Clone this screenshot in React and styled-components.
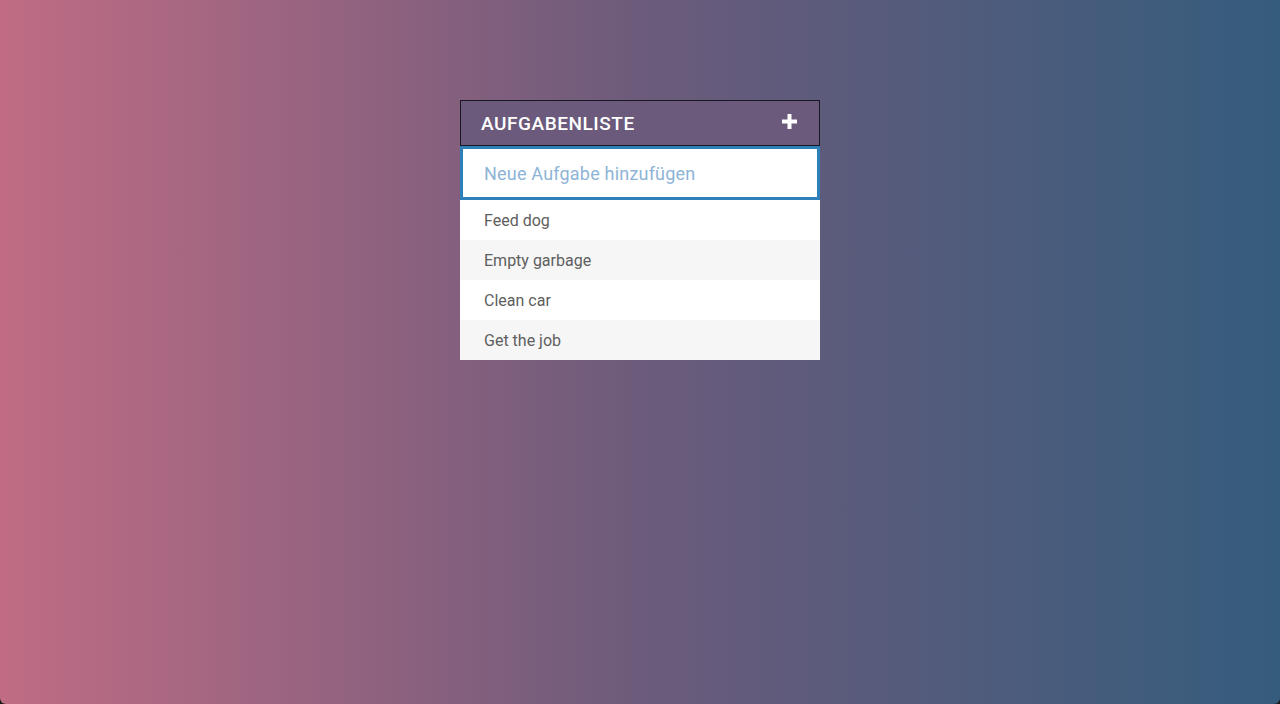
import React from "react";
import styled, { createGlobalStyle } from "styled-components";

const GlobalStyle = createGlobalStyle`
  html, body {
    margin: 0;
    padding: 0;
    background: #1a1a1a;
  }
  * {
    box-sizing: border-box;
  }
`;

const Page = styled.div`
  height: 704px;
  width: 1280px;
  background: linear-gradient(to right, #c06c84 0%, #6c5b7b 50%, #355c7d 100%);
  border-radius: 0 0 6px 6px;
  font-family: Roboto, "Liberation Sans", Arial, sans-serif;
  display: flex;
  justify-content: center;
  padding-top: 100px;
`;

const Todo = styled.div`
  width: 360px;
  display: flex;
  flex-direction: column;
  align-self: flex-start;
`;

const Header = styled.div`
  height: 46px;
  background: #6b5a7b;
  border: 1px solid #1b1722;
  display: flex;
  align-items: center;
  justify-content: space-between;
  padding: 0 20px 0 20px;
`;

const Title = styled.h1`
  margin: 0;
  font-size: 19px;
  font-weight: 500;
  color: #fff;
  letter-spacing: 0.55px;
`;

const AddButton = styled.button`
  border: none;
  background: none;
  padding: 0;
  margin-top: -4px;
  margin-right: 2px;
  display: flex;
  cursor: pointer;
`;

const Input = styled.input`
  height: 54px;
  width: 100%;
  border: 3px solid #2e80b9;
  background: #fff;
  padding: 0 21px;
  font-family: inherit;
  font-size: 18px;
  letter-spacing: 0.2px;
  color: #333;
  outline: none;
  &::placeholder {
    color: #8eb4d6;
  }
`;

const List = styled.ul`
  list-style: none;
  margin: 0;
  padding: 0;
`;

const Item = styled.li`
  height: 40px;
  display: flex;
  align-items: center;
  padding-left: 24px;
  font-size: 16px;
  color: #5e5e5e;
  background: ${({ $odd }) => ($odd ? "#f6f6f6" : "#fff")};
`;

const tasks = ["Feed dog", "Empty garbage", "Clean car", "Get the job"];

const App = () => {
  return (
    <>
      <GlobalStyle />
      <Page>
        <Todo>
          <Header>
            <Title>AUFGABENLISTE</Title>
            <AddButton aria-label="add">
              <svg width="15" height="15" viewBox="0 0 15 15">
                <path d="M5.5 0h4v5.5H15v4H9.5V15h-4V9.5H0v-4h5.5z" fill="#fff" />
              </svg>
            </AddButton>
          </Header>
          <Input placeholder="Neue Aufgabe hinzufügen" autoFocus />
          <List>
            {tasks.map((t, i) => (
              <Item key={t} $odd={i % 2 === 1}>
                {t}
              </Item>
            ))}
          </List>
        </Todo>
      </Page>
    </>
  );
};

export default App;
